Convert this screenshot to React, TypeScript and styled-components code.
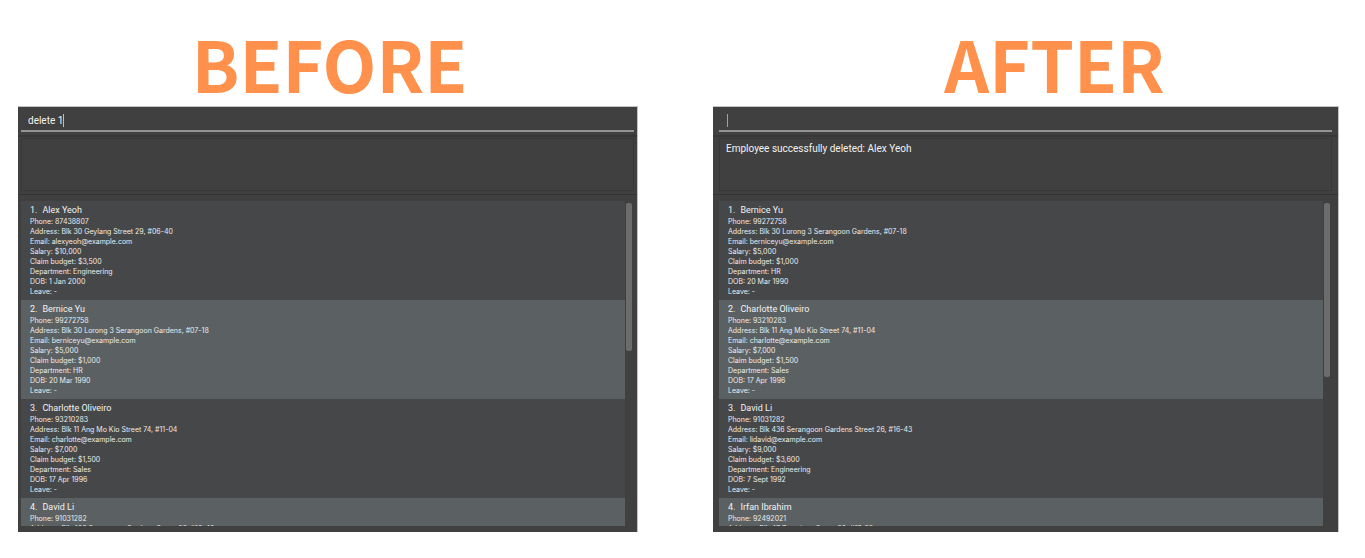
import React from "react";
import styled, { createGlobalStyle } from "styled-components";

const GlobalStyle = createGlobalStyle`
  * { box-sizing: border-box; }
  body {
    margin: 0;
    background: #ffffff;
    font-family: Inter, "Liberation Sans", sans-serif;
  }
`;

const Page = styled.main`
  display: grid;
  grid-template-columns: 619fr 625fr;
  column-gap: 76px;
  padding: 26px 27px 26px 18px;
`;

const Column = styled.section`
  min-width: 0;
`;

const Heading = styled.h1<{ $indent: number }>`
  margin: 0;
  padding: 0 0 8px ${(p) => p.$indent}px;
  color: #ff914d;
  font: 700 70px/73px "Noto Sans CJK SC", "Noto Sans", sans-serif;
  text-align: center;
`;

const AppWindow = styled.div`
  background: #404040;
  color: #f2f2f2;
  box-shadow: 0 0 0 1px #c4c4c4;
  clip-path: inset(-1px -1px 0 0);
`;

const CommandArea = styled.div<{ $gutter: number }>`
  padding: 0 ${(p) => p.$gutter}px 3px;
  border-bottom: 2px solid #373737;
`;

const CommandLine = styled.div`
  display: flex;
  align-items: center;
  height: 25px;
  padding: 4px 7px 0;
  border-bottom: 2px solid #939393;
`;

const CommandInput = styled.input`
  field-sizing: content;
  min-width: 0;
  padding: 0;
  border: 0;
  outline: 0;
  background: transparent;
  color: #f2f2f2;
  font: 400 10px/14px Roboto, "Liberation Sans", sans-serif;
`;

const Caret = styled.span<{ $color: string }>`
  width: 1px;
  height: 13px;
  background: ${(p) => p.$color};
`;

const ResultArea = styled.div<{ $gutter: number }>`
  padding: 1px ${(p) => p.$gutter}px 3px;
  border-bottom: 1px solid #333333;
`;

const ResultBox = styled.output`
  display: block;
  height: 53px;
  padding: 3px 6px;
  border: 1px solid #383838;
  font: 400 10px/14px Roboto, "Liberation Sans", sans-serif;
`;

const ListArea = styled.div<{ $gutter: number }>`
  display: flex;
  gap: 1px;
  padding: 6px ${(p) => p.$gutter}px;
`;

const EmployeeList = styled.ol`
  flex: 1;
  height: 325px;
  margin: 0;
  padding: 0;
  overflow: hidden;
  list-style: none;
`;

const Card = styled.li`
  height: 99px;
  padding: 3px 9px 0;
  background: #464749;

  &:nth-child(even) {
    background: #5b6163;
  }
`;

const Name = styled.h2`
  display: flex;
  gap: 5px;
  margin: 0 0 1px;
  font: 400 9px/12px Roboto, "Liberation Sans", sans-serif;
`;

const Detail = styled.p`
  margin: 0;
  color: #ececec;
  font-size: 7px;
  line-height: 10px;
  white-space: nowrap;
`;

const Track = styled.div`
  width: 8px;
  padding-top: 2px;
`;

const Thumb = styled.div<{ $length: number }>`
  width: 6px;
  height: ${(p) => p.$length}px;
  border-radius: 2px;
  background: #6c6c6c;
`;

type Employee = { name: string; details: string[] };

const alex: Employee = {
  name: "Alex Yeoh",
  details: [
    "Phone: 87438807",
    "Address: Blk 30 Geylang Street 29, #06-40",
    "Email: alexyeoh@example.com",
    "Salary: $10,000",
    "Claim budget: $3,500",
    "Department: Engineering",
    "DOB: 1 Jan 2000",
    "Leave: -",
  ],
};

const bernice: Employee = {
  name: "Bernice Yu",
  details: [
    "Phone: 99272758",
    "Address: Blk 30 Lorong 3 Serangoon Gardens, #07-18",
    "Email: berniceyu@example.com",
    "Salary: $5,000",
    "Claim budget: $1,000",
    "Department: HR",
    "DOB: 20 Mar 1990",
    "Leave: -",
  ],
};

const charlotte: Employee = {
  name: "Charlotte Oliveiro",
  details: [
    "Phone: 93210283",
    "Address: Blk 11 Ang Mo Kio Street 74, #11-04",
    "Email: charlotte@example.com",
    "Salary: $7,000",
    "Claim budget: $1,500",
    "Department: Sales",
    "DOB: 17 Apr 1996",
    "Leave: -",
  ],
};

const david: Employee = {
  name: "David Li",
  details: [
    "Phone: 91031282",
    "Address: Blk 436 Serangoon Gardens Street 26, #16-43",
    "Email: lidavid@example.com",
    "Salary: $9,000",
    "Claim budget: $3,600",
    "Department: Engineering",
    "DOB: 7 Sept 1992",
    "Leave: -",
  ],
};

const irfan: Employee = {
  name: "Irfan Ibrahim",
  details: ["Phone: 92492021", "Address: Blk 47 Tampines Street 20, #17-35"],
};

/* The last card is only partly in view, so it renders just its first lines. */
const preview = (e: Employee): Employee => ({ ...e, details: e.details.slice(0, 2) });

type SnapshotProps = {
  title: string;
  indent: number;
  gutter: number;
  command: string;
  caret: string;
  result: string;
  employees: Employee[];
  thumb: number;
};

function Snapshot({ title, indent, gutter, command, caret, result, employees, thumb }: SnapshotProps) {
  return (
    <Column>
      <Heading $indent={indent}>{title}</Heading>
      <AppWindow>
        <CommandArea $gutter={gutter}>
          <CommandLine>
            <CommandInput aria-label={`${title} command`} defaultValue={command} />
            <Caret $color={caret} />
          </CommandLine>
        </CommandArea>
        <ResultArea $gutter={gutter}>
          <ResultBox>{result}</ResultBox>
        </ResultArea>
        <ListArea $gutter={gutter}>
          <EmployeeList>
            {employees.map((e, i) => (
              <Card key={e.name}>
                <Name>
                  <span>{i + 1}.</span>
                  <span>{e.name}</span>
                </Name>
                {e.details.map((d) => (
                  <Detail key={d}>{d}</Detail>
                ))}
              </Card>
            ))}
          </EmployeeList>
          <Track>
            <Thumb $length={thumb} />
          </Track>
        </ListArea>
      </AppWindow>
    </Column>
  );
}

export default function App() {
  return (
    <>
      <GlobalStyle />
      <Page>
        <Snapshot
          title="BEFORE"
          indent={4}
          gutter={3}
          command="delete 1"
          caret="#c9c96a"
          result=""
          employees={[alex, bernice, charlotte, preview(david)]}
          thumb={148}
        />
        <Snapshot
          title="AFTER"
          indent={58}
          gutter={6}
          command=""
          caret="#a0a0a0"
          result="Employee successfully deleted: Alex Yeoh"
          employees={[bernice, charlotte, david, preview(irfan)]}
          thumb={174}
        />
      </Page>
    </>
  );
}
